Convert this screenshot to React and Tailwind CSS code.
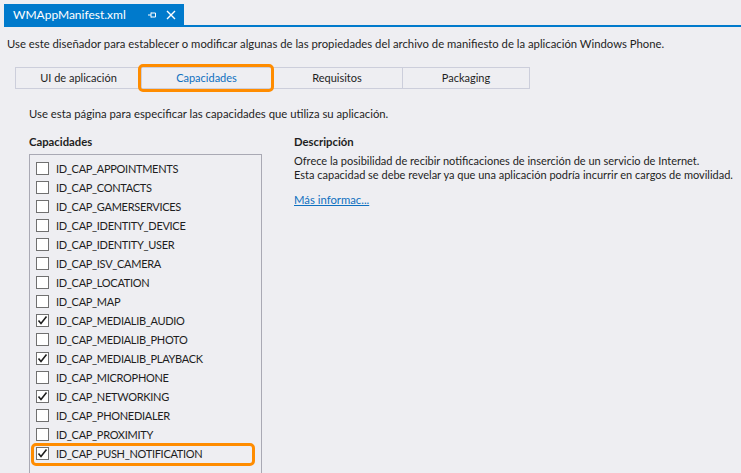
import React from "react";

const caps = [
  ["ID_CAP_APPOINTMENTS", false],
  ["ID_CAP_CONTACTS", false],
  ["ID_CAP_GAMERSERVICES", false],
  ["ID_CAP_IDENTITY_DEVICE", false],
  ["ID_CAP_IDENTITY_USER", false],
  ["ID_CAP_ISV_CAMERA", false],
  ["ID_CAP_LOCATION", false],
  ["ID_CAP_MAP", false],
  ["ID_CAP_MEDIALIB_AUDIO", true],
  ["ID_CAP_MEDIALIB_PHOTO", false],
  ["ID_CAP_MEDIALIB_PLAYBACK", true],
  ["ID_CAP_MICROPHONE", false],
  ["ID_CAP_NETWORKING", true],
  ["ID_CAP_PHONEDIALER", false],
  ["ID_CAP_PROXIMITY", false],
  ["ID_CAP_PUSH_NOTIFICATION", true],
];

function Check({ checked }) {
  return (
    <div className="w-[13px] h-[13px] border border-[#707070] bg-white flex items-center justify-center shrink-0">
      {checked && (
        <svg width="11" height="11" viewBox="0 0 11 11">
          <path d="M1.5 5.5 L4 8.5 L9.5 1.5" fill="none" stroke="#1e1e1e" strokeWidth="1.6" />
        </svg>
      )}
    </div>
  );
}

export default function App() {
  return (
    <div
      className="relative w-[741px] h-[473px] overflow-hidden bg-[#eeeef2] text-[#1e1e1e] text-[11.3px] whitespace-nowrap"
      style={{ fontFamily: 'Lato, "Liberation Sans", sans-serif' }}
    >
      {/* document tab strip */}
      <div className="pt-[4px] pl-[4px] flex">
        <div className="w-[180px] h-[21px] bg-[#007acc] text-white text-[12px] flex items-center pl-[9px] pr-[6px]">
          <span className="flex-1 leading-none">WMAppManifest.xml</span>
          <svg width="10" height="10" viewBox="0 0 10 10" className="mr-[9px]">
            <path d="M1 5 H4 M4 2.5 V7.5 M4 3 H8.5 V7 H4" fill="none" stroke="white" strokeWidth="1" />
          </svg>
          <svg width="10" height="10" viewBox="0 0 10 10" className="mr-[2px]">
            <path d="M1 1 L9 9 M9 1 L1 9" stroke="white" strokeWidth="1.4" />
          </svg>
        </div>
      </div>
      <div className="ml-[4px] h-[2px] bg-[#007acc]" />

      <div className="pl-[7px] pt-[9px] h-[25px] leading-[16px]">
        Use este diseñador para establecer o modificar algunas de las propiedades del archivo de manifiesto de la aplicación Windows Phone.
      </div>

      {/* tabs */}
      <div className="ml-[15px] mt-[15px] flex w-[515px] h-[22px] border border-[#cccedb] text-[11px]">
        <div className="w-[126px] flex items-center justify-center border-r border-[#cccedb]">UI de aplicación</div>
        <div className="w-[130px] flex items-center justify-center border-r border-[#cccedb] text-[#0e70c0]">Capacidades</div>
        <div className="w-[131px] flex items-center justify-center border-r border-[#cccedb]">Requisitos</div>
        <div className="flex-1 flex items-center justify-center">Packaging</div>
      </div>

      <div className="pl-[29px] pt-[17px] h-[33px] leading-[16px]">
        Use esta página para especificar las capacidades que utiliza su aplicación.
      </div>

      <div className="flex pl-[29px] pt-[12px]">
        <div className="w-[233px] shrink-0">
          <div className="font-bold leading-[16px] h-[20px]">Capacidades</div>
          <div className="border border-[#a9a9b4] pt-[4px] pl-[6px] h-[400px]">
            {caps.map(([name, checked]) => (
              <div key={name} className="h-[19px] flex items-center gap-[7px]">
                <Check checked={checked} />
                <span className="leading-none text-[11px] tracking-[-0.3px]">{name}</span>
              </div>
            ))}
          </div>
        </div>
        <div className="pl-[32px]">
          <div className="font-bold leading-[16px] h-[20px]">Descripción</div>
          <div className="leading-[14px] text-[11px]">
            <div>Ofrece la posibilidad de recibir notificaciones de inserción de un servicio de Internet.</div>
            <div>Esta capacidad se debe revelar ya que una aplicación podría incurrir en cargos de movilidad.</div>
          </div>
          <div className="mt-[10px] text-[#0e70c0] underline leading-[16px]">Más informac...</div>
        </div>
      </div>

      {/* annotation highlights */}
      <div className="absolute left-[138px] top-[64px] w-[136px] h-[28px] border-[3px] border-[#ff8c00] rounded-[5px]" />
      <div className="absolute left-[31px] top-[443px] w-[224px] h-[23px] border-[3px] border-[#ff8c00] rounded-[5px]" />
    </div>
  );
}
